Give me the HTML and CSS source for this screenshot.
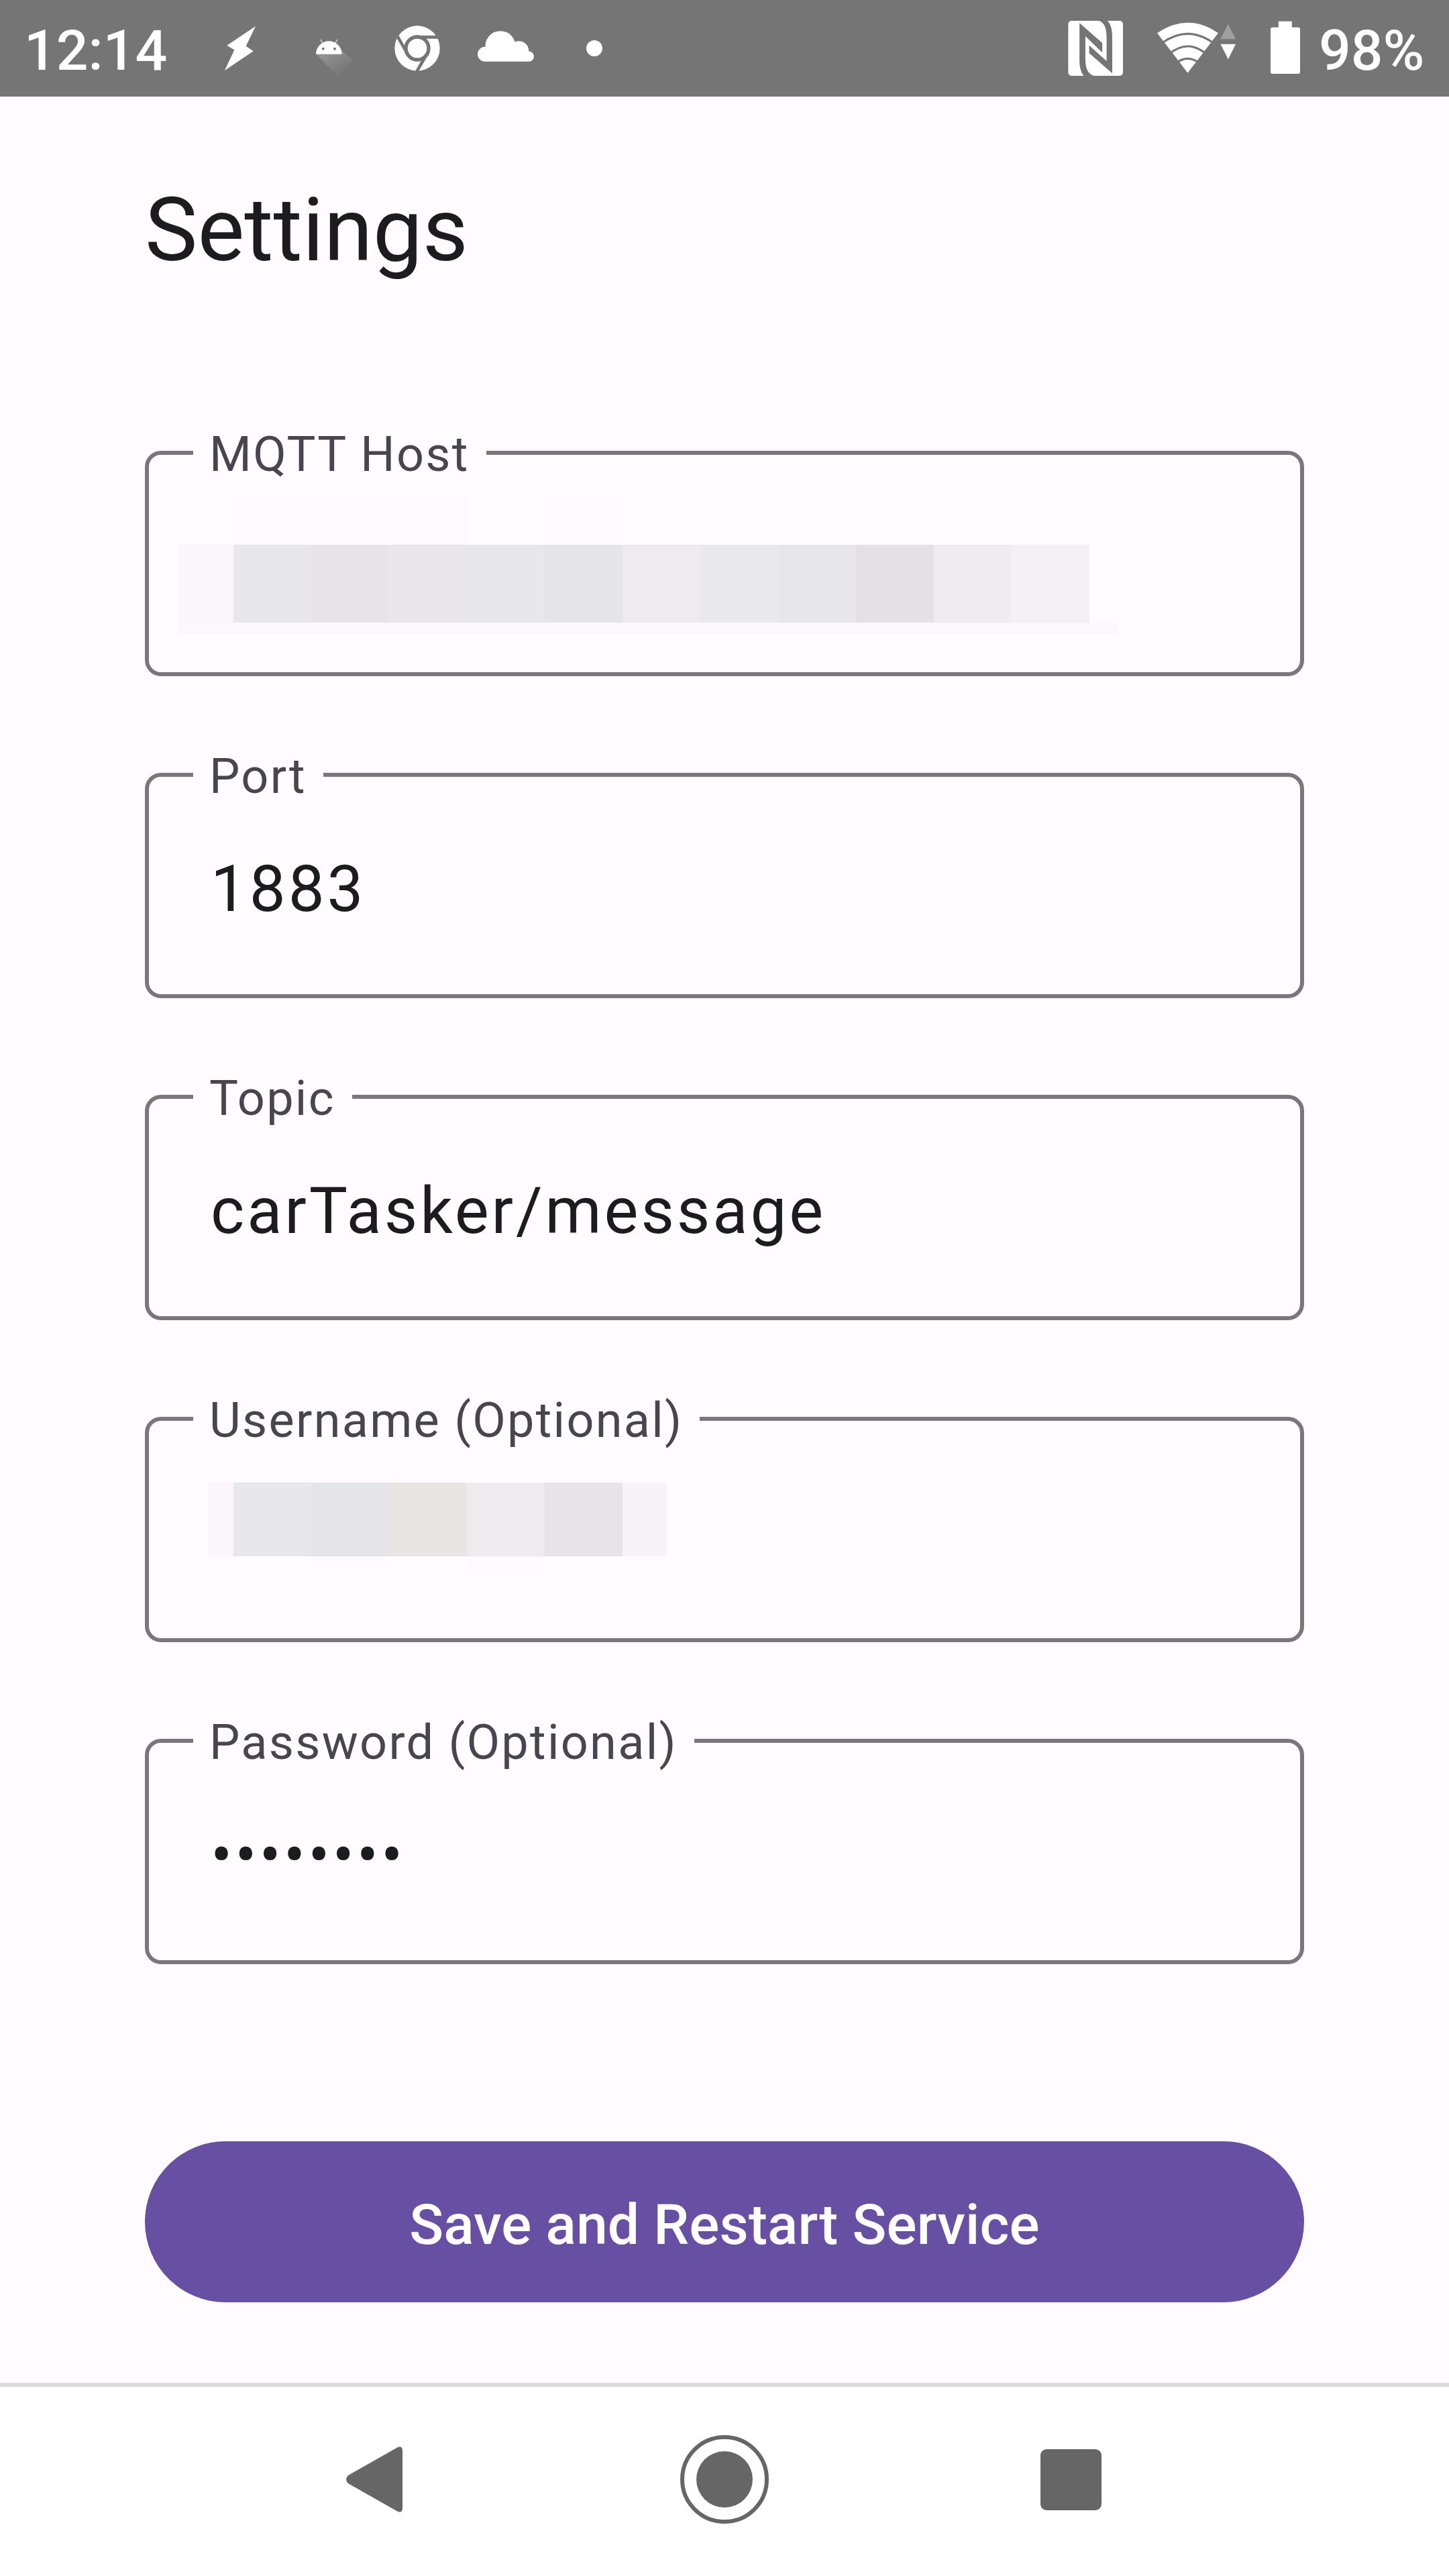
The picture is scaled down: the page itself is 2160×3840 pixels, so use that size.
FILE: index.html
```html
<!DOCTYPE html>
<html lang="en">
<head>
<meta charset="utf-8">
<title>Settings</title>
<link rel="stylesheet" href="styles.css">
</head>
<body>
<header class="status">
  <div class="time">12:14</div>
  <svg class="bolt" viewBox="1005 117 138 199" preserveAspectRatio="none"><path d="M1143 117L1100 207L1133 229L1005 316L1048 224L1015 204Z"/></svg>
  <svg class="droid" viewBox="92 175 168 168">
    <defs><linearGradient id="fade" x1="0" y1="0" x2="1" y2="1"><stop offset="0.1" stop-color="#fff" stop-opacity=".24"/><stop offset=".85" stop-color="#fff" stop-opacity="0"/></linearGradient></defs>
    <path fill="url(#fade)" d="M92 243L190 341L258 271L206 225Z"/>
    <path d="M92 243A58 58 0 0 1 208 243Z"/>
    <path class="antenna" d="M112 178L125 198M188 178L175 198"/>
    <circle class="cut" cx="124" cy="219" r="6"/><circle class="cut" cx="176" cy="219" r="6"/>
  </svg>
  <svg class="chrome" viewBox="-102 -102 204 204">
    <circle r="101"/>
    <circle class="groove" r="51"/>
    <path class="groove-line" d="M0 -50H110"/>
    <path class="groove-line" d="M0 -50H110" transform="rotate(120)"/>
    <path class="groove-line" d="M0 -50H110" transform="rotate(240)"/>
  </svg>
  <svg class="cloud" viewBox="817 138 250 136"><circle cx="918" cy="205" r="67"/><circle cx="1000" cy="227" r="44"/><circle cx="850" cy="241" r="33"/><circle cx="1044" cy="251" r="23"/><path d="M850 220H1030V240H1044V274H850Z"/></svg>
  <span class="more"></span>
  <svg class="nfc" viewBox="85 93 215 246" preserveAspectRatio="none">
    <rect x="86" y="93" width="214" height="246" rx="13" ry="15"/>
    <path class="cut" d="M130 103L219 192V235L153 162V265C154 308 162 330 188 340H148C136 325 130 300 130 270Z"/>
    <path class="cut" d="M168 203L236 273V165C236 120 224 98 204 92H238C252 106 258 130 258 165V328L168 238Z"/>
  </svg>
  <svg class="wifi" viewBox="432 93 306 246" preserveAspectRatio="none">
    <path d="M432 148Q551 54 670 148L551 326Z"/>
    <path class="wave" d="M450 193Q551 109 652 193M480 240Q551 174 622 240M508 280Q551 244 594 280"/>
    <path class="dim" d="M709 108L738 175H679Z"/>
    <path d="M679 197H738L709 265Z"/>
  </svg>
  <svg class="battery" viewBox="873 93 115 246" preserveAspectRatio="none"><path d="M904 95H956V122H980Q988 122 988 130V322Q988 330 980 330H881Q873 330 873 322V130Q873 122 881 122H904Z"/></svg>
  <div class="level">98%</div>
</header>

<main class="content">
  <h1 class="title">Settings</h1>
  <form class="form">
    <fieldset class="field">
      <legend class="label">MQTT Host</legend>
      <div class="mosaic host">
        <i class="m-faint c2"></i><i class="m-faint2 c3"></i><i class="m-faint c4"></i><i class="m-faint2 c6"></i>
        <i class="t1"></i><i class="t2"></i><i class="t3"></i><i class="t4"></i><i class="t2"></i><i class="t5"></i><i class="t6"></i><i class="t7"></i><i class="t8"></i><i class="t9"></i><i class="t10"></i><i class="t11"></i>
        <i class="strip"></i>
      </div>
    </fieldset>
    <fieldset class="field">
      <legend class="label">Port</legend>
      <div class="value">1883</div>
    </fieldset>
    <fieldset class="field">
      <legend class="label">Topic</legend>
      <div class="value">carTasker/message</div>
    </fieldset>
    <fieldset class="field">
      <legend class="label">Username (Optional)</legend>
      <div class="mosaic user">
        <i class="t1"></i><i class="t2"></i><i class="t5"></i><i class="t12"></i><i class="t6"></i><i class="t3"></i><i class="t13"></i>
        <i class="m-faint2 c3"></i><i class="m-faint c5"></i>
      </div>
    </fieldset>
    <fieldset class="field">
      <legend class="label">Password (Optional)</legend>
      <div class="value">••••••••</div>
    </fieldset>
    <button class="save" type="button">Save and Restart Service</button>
  </form>
</main>

<nav class="nav">
  <svg class="back" viewBox="0 0 84 98"><path d="M3 43L77 1Q84 -2 84 7V91Q84 100 77 97L3 55Q-3 49 3 43Z"/></svg>
  <svg class="home" viewBox="-66 -66 132 132"><circle class="ring" r="63"/><circle r="42"/></svg>
  <svg class="recent" viewBox="0 0 91 91"><rect width="91" height="91" rx="9"/></svg>
</nav>
</body>
</html>
```
FILE: styles.css
```css
* { box-sizing: border-box; }

body {
  margin: 0;
  width: 2160px;
  height: 3840px;
  display: flex;
  flex-direction: column;
  background: #fffbff;
  color: #1c1b1f;
  font-family: Roboto, "Noto Sans", sans-serif;
  overflow: hidden;
}

svg { display: block; flex: none; fill: currentColor; }

/* Status bar */
.status {
  height: 144px;
  flex: none;
  display: flex;
  align-items: flex-start;
  background: #757575;
  color: #fff;
  font-size: 84px;
  font-weight: 500;
  line-height: 98px;
}
.time { width: 299px; margin: 27px 0 0 36px; }
.bolt { width: 46px; height: 66px; margin-top: 39px; }
.droid { width: 56px; height: 56px; margin: 58px 0 0 90px; }
.antenna { stroke: #fff; stroke-opacity: .6; stroke-width: 5; }
.cut { fill: #757575; }
.chrome { width: 68px; height: 68px; margin: 38px 0 0 61px; }
.groove { stroke: #757575; stroke-width: 16; }
.groove-line { stroke: #757575; stroke-width: 14; }
.cloud { width: 84px; height: 46px; margin: 46px 0 0 56px; }
.more { width: 24px; height: 24px; margin: 60px 0 0 78px; border-radius: 50%; background: #fff; }
.nfc { width: 82px; height: 82px; margin: 31px 0 0 auto; }
.wifi { width: 117px; height: 82px; margin: 31px 0 0 51px; }
.wave { fill: none; stroke: #757575; stroke-width: 9; }
.dim { fill: #a0a0a0; }
.battery { width: 44px; height: 82px; margin: 31px 0 0 52px; }
.level { width: 194px; margin: 27px 0 0 28px; white-space: nowrap; }

/* Page content */
.content { flex: 1; padding: 0 216px; }
.title {
  margin: 115px 0 0;
  font-size: 132px;
  font-weight: 400;
  line-height: 168px;
}
.form { margin-top: 245px; display: flex; flex-direction: column; }

.field {
  height: 336px;
  min-width: 0;
  margin: 0 0 144px;
  padding: 0 0 0 66px;
  border: 6px solid #7b757e;
  border-radius: 24px;
}
.label {
  height: 6px;
  margin: 0;
  padding: 0 25px 0 24px;
  color: #49454f;
  font-size: 72px;
  line-height: 11px;
  letter-spacing: 2.3px;
  white-space: nowrap;
}
.value {
  padding: 95px 0 0 26px;
  font-size: 96px;
  line-height: 144px;
  letter-spacing: 3.9px;
}

/* Pixelated values */
.mosaic { display: grid; }
.host {
  margin: 60px 0 0 -22px;
  grid-template-columns: 82px repeat(11, 116px) 43px;
  grid-template-rows: 74px 116px 18px;
}
.user {
  margin: 92px 0 0 22px;
  grid-template-columns: 38px repeat(5, 116px) 66px;
  grid-template-rows: 110px 22px;
}
.c2 { grid-column: 2; }
.c3 { grid-column: 3; }
.c4 { grid-column: 4; }
.c5 { grid-column: 5; }
.c6 { grid-column: 6; }
.m-faint { background: #fdf9fc; }
.m-faint2 { background: #fefafd; }
.t1 { background: #faf6f9; grid-column: 1; }
.t2 { background: #e8e7e9; }
.t3 { background: #e7e3e6; }
.t4 { background: #eae6e9; }
.t5 { background: #e5e4e6; }
.t6 { background: #eeeaed; }
.t7 { background: #e9e8ea; }
.t8 { background: #e7e6e8; }
.t9 { background: #e4e0e3; }
.t10 { background: #efebee; }
.t11 { background: #f4f0f3; }
.t12 { background: #e7e6e5; }
.t13 { background: #f7f3f6; }
.strip { grid-column: 1 / -1; background: #fbf7fa; }

.save {
  height: 240px;
  margin-top: 120px;
  padding: 10px 0 0;
  border: 0;
  border-radius: 120px;
  background: #6750a4;
  color: #fff;
  font: 500 84px/120px Roboto, "Noto Sans", sans-serif;
  letter-spacing: .15px;
}

/* System navigation */
.nav {
  flex: none;
  height: 288px;
  display: flex;
  align-items: center;
  padding-left: 516px;
  border-top: 6px solid #dcdcdc;
  background: #fff;
  color: #666;
}
.back { width: 84px; height: 98px; margin-top: -6px; }
.home { width: 132px; height: 132px; margin: -6px 0 0 414px; }
.ring { fill: none; stroke: #666; stroke-width: 6; }
.recent { width: 91px; height: 91px; margin: -6px 0 0 405px; }
```
